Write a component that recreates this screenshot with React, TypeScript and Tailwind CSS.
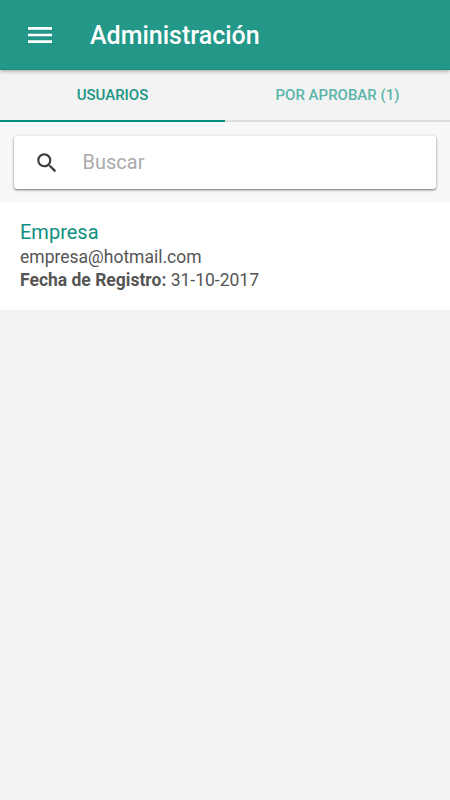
import { useState } from 'react';
import { MdMenu, MdSearch } from 'react-icons/md';

const users = [
  { name: 'Empresa', email: 'empresa@hotmail.com', registered: '31-10-2017' },
];

function Header() {
  return (
    <header className="relative z-10 flex h-[70px] items-center border-b border-[#148d7c] bg-[#239889] text-white shadow-[0_1px_4px_rgba(0,0,0,0.35)]">
      <button aria-label="Menú" className="ml-6 flex">
        <MdMenu size={32} />
      </button>
      <h1 className="ml-[34px] pt-0.5 text-[25px] font-medium leading-none">Administración</h1>
    </header>
  );
}

function Tabs() {
  return (
    <nav className="flex h-[52px] bg-[#f3f3f3] text-[15px] font-medium">
      <button className="flex-1 border-b-2 border-[#008f7a] text-[#1a9585]">USUARIOS</button>
      <button className="flex-1 border-b-2 border-[#dedede] text-[#5ab5aa]">POR APROBAR (1)</button>
    </nav>
  );
}

function SearchBar() {
  const [query, setQuery] = useState('');

  return (
    <div className="bg-[#f8f8f8] px-[14px] pt-[14px] pb-[13px]">
      <label className="flex h-[53px] items-center rounded-[3px] bg-white pb-px shadow-[0_1px_2px_rgba(0,0,0,0.45),0_1px_4px_rgba(0,0,0,0.15)]">
        <MdSearch size={26} className="mt-px ml-5 text-[#3c3c3c]" />
        <input
          value={query}
          onChange={(e) => setQuery(e.target.value)}
          placeholder="Buscar"
          className="ml-[22.5px] min-w-0 flex-1 text-xl outline-none placeholder:text-[#aaa]"
        />
      </label>
    </div>
  );
}

export default function App() {
  return (
    <div className="min-h-screen bg-[#f3f3f3] font-['Roboto',sans-serif]">
      <Header />
      <Tabs />
      <SearchBar />
      <ul>
        {users.map((user) => (
          <li key={user.email} className="h-[108px] bg-white px-5 pt-[17px] text-[#555]">
            <h2 className="text-xl leading-[26px] text-[#0e8f7f]">{user.name}</h2>
            <p className="text-[17.5px] leading-6">{user.email}</p>
            <p className="text-[17.5px] leading-[23px]">
              <b>Fecha de Registro:</b> {user.registered}
            </p>
          </li>
        ))}
      </ul>
    </div>
  );
}
